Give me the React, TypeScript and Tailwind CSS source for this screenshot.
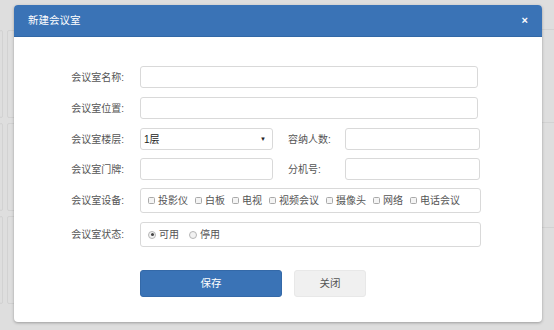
import React from 'react';

const font = { fontFamily: '"Liberation Sans", "Noto Sans CJK SC", sans-serif' };

const Box: React.FC = () => (
  <span className="inline-block w-[7px] h-[7px] border border-[#a9a9a9] rounded-[1.5px] bg-[#f4f4f4] mr-[3px] shrink-0" />
);

const Radio: React.FC<{ checked?: boolean }> = ({ checked }) => (
  <span className="inline-flex items-center justify-center w-[8px] h-[8px] rounded-full border border-[#b5b5b5] bg-[#f2f2f2] mr-[3px] shrink-0">
    {checked && <span className="w-[3px] h-[3px] rounded-full bg-[#444]" />}
  </span>
);

const Field: React.FC<{ w: string; h?: string; className?: string; children?: React.ReactNode }> = ({ w, h = 'h-[22px]', className = '', children }) => (
  <div className={`${w} ${h} ${className} shrink-0 border border-[#d9d9d9] rounded-[3px] bg-white flex items-center px-[6px] text-[10px] text-[#333]`}>{children}</div>
);

const Label: React.FC<{ text: string; w?: string }> = ({ text, w = 'w-[70px]' }) => (
  <div className={`${w} text-right text-[10px] text-[#555] shrink-0 whitespace-nowrap`}>{text}</div>
);

const Background: React.FC = () => (
  <div className="flex h-[330px] w-[554px] bg-[#dedede] pt-[30px] justify-between">
    <div className="flex gap-[4px] -ml-[1px]">
      {[0, 1].map((c) => (
        <div key={c} className={`flex flex-col gap-[5px] ${c === 0 ? 'w-[4px]' : 'w-[10px]'}`}>
          {[0, 1, 2].map((r) => (
            <div key={r} className="h-[88px] border border-[#d2d2d2] rounded-[2px]" />
          ))}
        </div>
      ))}
    </div>
    <div className="flex flex-col w-[14px] -mt-[1px]">
      <div className="h-[93px] border-t border-[#d2d2d2]" />
      <div className="h-[105px] border-t border-[#d2d2d2]" />
      <div className="h-[80px] border-t border-[#d2d2d2]" />
    </div>
  </div>
);

export default function App() {
  const devices = ['投影仪', '白板', '电视', '视频会议', '摄像头', '网络', '电话会议'];
  return (
    <div className="relative w-[554px] h-[330px] overflow-hidden" style={font}>
      <Background />
      <div className="absolute left-[14px] top-[5px] w-[528px] h-[317px] bg-white rounded-[4px] shadow-[0_1px_3px_rgba(0,0,0,0.3)] overflow-hidden flex flex-col">
        <div className="h-[32px] bg-[#3a73b6] border-b border-[#3268a6] flex items-center justify-between pl-[14px] pr-[14px] shrink-0">
          <span className="text-[10.5px] text-white">新建会议室</span>
          <span className="text-[11px] text-white font-bold leading-none">×</span>
        </div>
        <div className="flex flex-col pt-[29px] pl-[40px]">
          <div className="flex items-center h-[22px]">
            <Label text="会议室名称:" />
            <Field w="w-[338px]" className="ml-[16px]" />
          </div>
          <div className="flex items-center h-[22px] mt-[9px]">
            <Label text="会议室位置:" />
            <Field w="w-[338px]" className="ml-[16px]" />
          </div>
          <div className="flex items-center h-[22px] mt-[9px]">
            <Label text="会议室楼层:" />
            <Field w="w-[133px]" className="ml-[16px]">
              <span className="flex-1 -ml-[3px] text-[#222]">1层</span>
              <span className="text-[6px] text-[#222]">▼</span>
            </Field>
            <div className="text-[10px] text-[#555] w-[49px] ml-[15px] whitespace-nowrap">容纳人数:</div>
            <Field w="w-[135px]" className="ml-[8px]" />
          </div>
          <div className="flex items-center h-[22px] mt-[8px]">
            <Label text="会议室门牌:" />
            <Field w="w-[133px]" className="ml-[16px]" />
            <div className="text-[10px] text-[#555] w-[49px] ml-[15px] whitespace-nowrap">分机号:</div>
            <Field w="w-[135px]" className="ml-[8px]" />
          </div>
          <div className="flex items-center mt-[8px]">
            <Label text="会议室设备:" />
            <Field w="w-[341px]" h="h-[25px]" className="ml-[16px]">
              <div className="flex items-center gap-[7px] text-[10px] text-[#555] pl-[1px] whitespace-nowrap">
                {devices.map((d) => (
                  <span key={d} className="flex items-center">
                    <Box />
                    {d}
                  </span>
                ))}
              </div>
            </Field>
          </div>
          <div className="flex items-center mt-[9px]">
            <Label text="会议室状态:" />
            <Field w="w-[341px]" h="h-[25px]" className="ml-[16px]">
              <div className="flex items-center gap-[10px] text-[10px] text-[#555] pl-[1px]">
                <span className="flex items-center"><Radio checked />可用</span>
                <span className="flex items-center"><Radio />停用</span>
              </div>
            </Field>
          </div>
          <div className="flex gap-[12px] mt-[23px] pl-[86px]">
            <button className="w-[142px] h-[27px] bg-[#3a73b6] border border-[#3469a8] rounded-[3px] text-white text-[10.5px]">保存</button>
            <button className="w-[72px] h-[27px] bg-[#f0f0f0] border border-[#e8e8e8] rounded-[3px] text-[#555] text-[10.5px]">关闭</button>
          </div>
        </div>
      </div>
    </div>
  );
}
